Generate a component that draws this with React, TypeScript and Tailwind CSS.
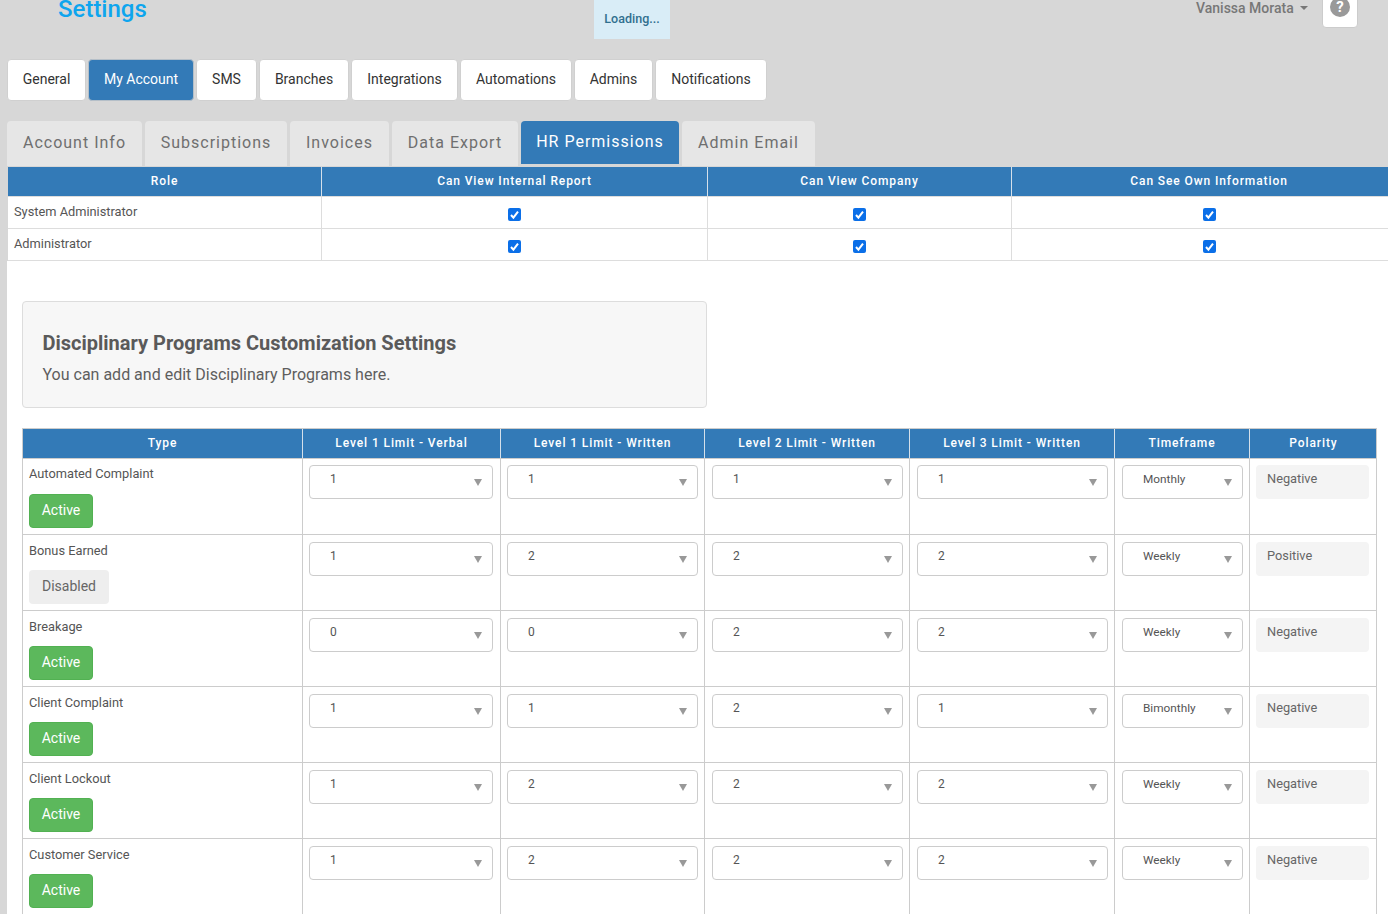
import React from "react";

const nav = ["General", "My Account", "SMS", "Branches", "Integrations", "Automations", "Admins", "Notifications"];
const navW = ["w-[79px]", "w-[106px]", "w-[61px]", "w-[90px]", "w-[107px]", "w-[112px]", "w-[79px]", "w-[112px]"];
const tabs = ["Account Info", "Subscriptions", "Invoices", "Data Export", "HR Permissions", "Admin Email"];
const tabW = ["w-[135px]", "w-[142px]", "w-[99px]", "w-[126px]", "w-[158px]", "w-[133px]"];

const rows = [
  { name: "Automated Complaint", active: true, v: ["1", "1", "1", "1"], t: "Monthly", p: "Negative" },
  { name: "Bonus Earned", active: false, v: ["1", "2", "2", "2"], t: "Weekly", p: "Positive" },
  { name: "Breakage", active: true, v: ["0", "0", "2", "2"], t: "Weekly", p: "Negative" },
  { name: "Client Complaint", active: true, v: ["1", "1", "2", "1"], t: "Bimonthly", p: "Negative" },
  { name: "Client Lockout", active: true, v: ["1", "2", "2", "2"], t: "Weekly", p: "Negative" },
  { name: "Customer Service", active: true, v: ["1", "2", "2", "2"], t: "Weekly", p: "Negative" },
];

const roleGrid = "grid grid-cols-[314px_386px_304px_394px]";
const progGrid = "grid grid-cols-[280px_198px_204px_205px_205px_135px_127px]";

function Check() {
  return (
    <span className="flex h-[13px] w-[13px] items-center justify-center rounded-[2px] bg-[#0b6fe8]">
      <svg viewBox="0 0 13 13" className="h-[13px] w-[13px]" fill="none" stroke="#fff" strokeWidth="2">
        <path d="M3 7l2.4 2.6L10 3.6" />
      </svg>
    </span>
  );
}

function Select({ value, small }: { value: string; small?: boolean }) {
  return (
    <div className="relative h-[34px] w-full rounded-[4px] border border-[#cccccc] bg-white">
      <span className={small ? "absolute left-[20px] top-[3px] text-[11.8px] leading-[20px] text-[#555]" : "absolute left-[20px] top-[3px] text-[12px] leading-[20px] text-[#555]"}>
        {value}
      </span>
      <span className="absolute right-[10px] top-[13px] h-0 w-0 border-x-[4px] border-t-[7px] border-x-transparent border-t-[#999]" />
    </div>
  );
}

export default function App() {
  return (
    <div className="h-[914px] w-[1388px] overflow-hidden bg-[#d7d7d7] font-['Roboto',sans-serif] text-[#555]">
      <header className="relative h-[59px]">
        <h1 className="pl-[58px] text-[24px] font-medium leading-[18px] text-[#0ea5ee]">Settings</h1>
        <div className="absolute left-[594px] top-0 flex h-[39px] w-[76px] items-center justify-center bg-[#d9edf7] pb-[1px] text-[12.5px] font-medium text-[#31708f]">
          Loading...
        </div>
        <div className="absolute left-[1196px] top-0 flex h-[16px] items-center text-[14px] font-medium leading-[16px] text-[#777]">
          Vanissa Morata
          <span className="ml-[6px] h-0 w-0 border-x-[4px] border-t-[4px] border-x-transparent border-t-[#777]" />
        </div>
        <div className="absolute left-[1322px] top-[-6px] flex h-[34px] w-[36px] items-center justify-center rounded-[4px] border border-[#ccc] bg-white">
          <span className="mt-[-8px] flex h-[20px] w-[20px] items-center justify-center rounded-full bg-[#999] text-[15px] font-bold leading-none text-white">?</span>
        </div>
      </header>

      <nav className="ml-[7px] flex h-[42px] gap-[2px]">
        {nav.map((n, i) => (
          <div
            key={n}
            className={
              navW[i] +
              (n === "My Account"
                ? " flex items-center justify-center rounded-[4px] border border-[#b5bfc8] bg-[#337ab7] pb-[2px] text-[14px] text-white"
                : " flex items-center justify-center rounded-[4px] border border-[#d0d0d0] bg-white pb-[2px] text-[14px] text-[#333]")
            }
          >
            {n}
          </div>
        ))}
      </nav>

      <div className="ml-[7px] mt-[20px] flex h-[46px] gap-[3px]">
        {tabs.map((t, i) => (
          <div
            key={t}
            className={
              tabW[i] +
              (t === "HR Permissions"
                ? " flex h-[43px] items-center justify-center rounded-t-[4px] bg-[#337ab7] pb-[2px] text-[16px] tracking-[1px] text-white"
                : " flex h-[45px] items-center justify-center rounded-t-[4px] bg-[#e6e6e6] pb-[2px] text-[16px] tracking-[1px] text-[#6f6f6f]")
            }
          >
            {t}
          </div>
        ))}
      </div>

      <main className="ml-[7px] h-[747px] overflow-hidden bg-white">
        <section className="border-l border-[#d7d7d7]">
          <div className={roleGrid + " h-[30px] border-b border-[#ddd] bg-[#337ab7] text-[12px] font-medium tracking-[0.9px] text-white"}>
            {["Role", "Can View Internal Report", "Can View Company", "Can See Own Information"].map((h) => (
              <div key={h} className="flex items-center justify-center border-r border-[#d5e0ea] pb-[2px] last:border-r-0">{h}</div>
            ))}
          </div>
          {["System Administrator", "Administrator"].map((r) => (
            <div key={r} className={roleGrid + " h-[32px] border-b border-[#ddd] text-[12.8px] text-[#555]"}>
              <div className="border-r border-[#ddd] pl-[6px] pt-[6px] leading-[18px]">{r}</div>
              <div className="flex items-start justify-center border-r border-[#ddd] pt-[11px]"><Check /></div>
              <div className="flex items-start justify-center border-r border-[#ddd] pt-[11px]"><Check /></div>
              <div className="flex items-start justify-center pt-[11px]"><Check /></div>
            </div>
          ))}
        </section>

        <section className="ml-[15px] mt-[40px] h-[107px] w-[685px] rounded-[4px] border border-[#ddd] bg-[#f7f7f7] pl-[19.5px] pt-[29px]">
          <h2 className="text-[20px] font-bold leading-[24px] text-[#5a5a5a]">Disciplinary Programs Customization Settings</h2>
          <p className="mt-[8px] text-[16px] leading-[24px] text-[#5e5e5e]">You can add and edit Disciplinary Programs here.</p>
        </section>

        <section className="ml-[15px] mt-[20px] w-[1355px] border-x border-t border-[#ccc]">
          <div className={progGrid + " h-[29px] bg-[#337ab7] text-[12px] font-medium tracking-[0.9px] text-white"}>
            {["Type", "Level 1 Limit - Verbal", "Level 1 Limit - Written", "Level 2 Limit - Written", "Level 3 Limit - Written", "Timeframe", "Polarity"].map((h) => (
              <div key={h} className="flex items-center justify-center border-r border-[#d5e0ea] pb-[2px] last:border-r-0">{h}</div>
            ))}
          </div>
          {rows.map((r, ri) => (
            <div key={r.name} className={progGrid + " h-[76px] border-t border-[#ccc]"}>
              <div className={ri === 0 ? "border-r border-[#ccc] pl-[6px] pt-[5px]" : "border-r border-[#ccc] pl-[6px] pt-[6px]"}>
                <div className="text-[12.8px] leading-[20px] text-[#555]">{r.name}</div>
                {r.active ? (
                  <div className={ri === 0 ? "mt-[10px] flex h-[34px] w-[64px] items-center justify-center rounded-[4px] border border-[#52b152] bg-[#5cb85c] pb-[2px] text-[14px] text-white" : "mt-[9px] flex h-[34px] w-[64px] items-center justify-center rounded-[4px] border border-[#52b152] bg-[#5cb85c] pb-[2px] text-[14px] text-white"}>Active</div>
                ) : (
                  <div className="mt-[9px] flex h-[34px] w-[80px] items-center justify-center rounded-[4px] bg-[#eeeeee] pb-[2px] text-[14px] text-[#666]">Disabled</div>
                )}
              </div>
              {r.v.map((v, i) => (
                <div
                  key={i}
                  className={
                    (ri === 0 ? "pt-[6px] " : "pt-[7px] ") +
                    (i === 0 ? "border-r border-[#ccc] pl-[6px] pr-[7px]" : i === 1 ? "border-r border-[#ccc] pl-[6px] pr-[6px]" : "border-r border-[#ccc] pl-[7px] pr-[6px]")
                  }
                >
                  <Select value={v} />
                </div>
              ))}
              <div className={(ri === 0 ? "pt-[6px] " : "pt-[7px] ") + "border-r border-[#ccc] pl-[7px] pr-[6px]"}>
                <Select value={r.t} small />
              </div>
              <div className={(ri === 0 ? "pt-[6px] " : "pt-[7px] ") + "pl-[6px] pr-[8px]"}>
                <div className="h-[34px] rounded-[4px] bg-[#f4f4f4] pl-[11px] pt-[4px] text-[12.8px] leading-[20px] text-[#666]">{r.p}</div>
              </div>
            </div>
          ))}
        </section>
      </main>
    </div>
  );
}
